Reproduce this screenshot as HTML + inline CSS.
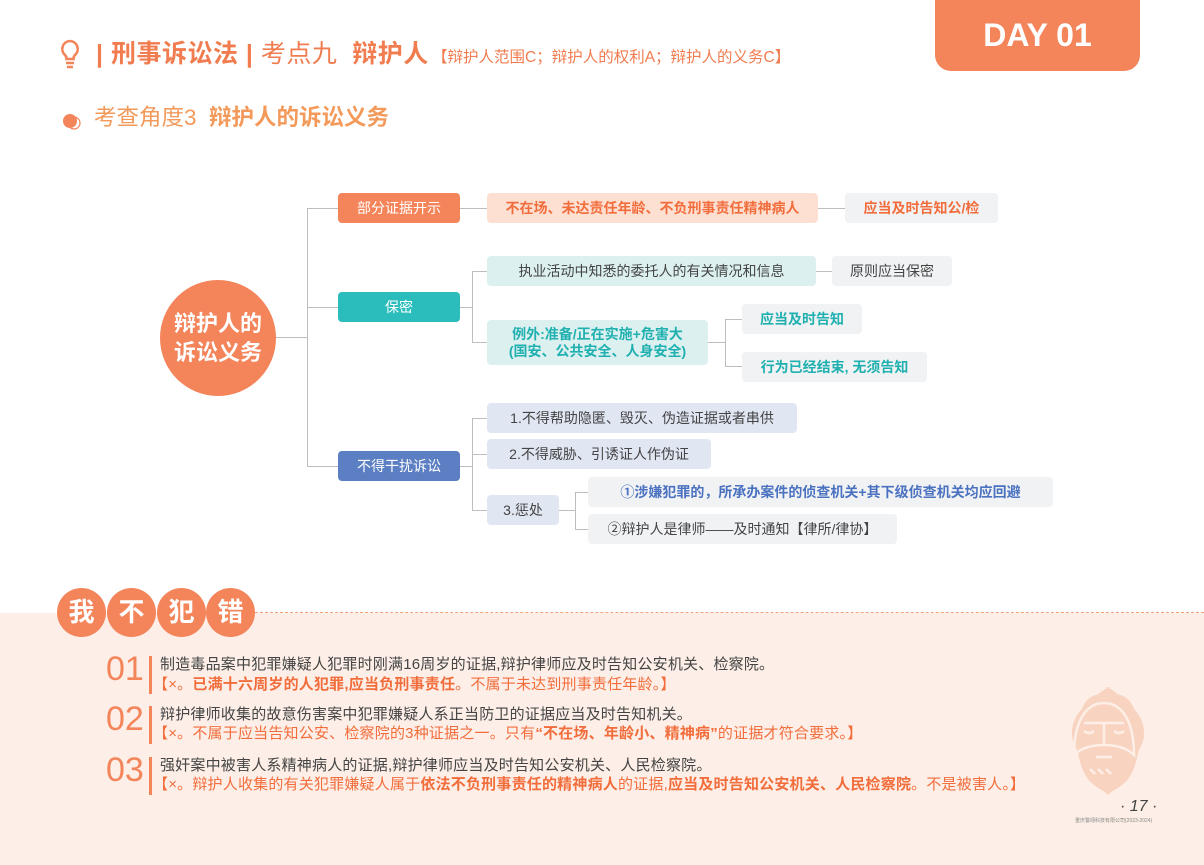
<!DOCTYPE html>
<html><head><meta charset="utf-8"><style>
*{margin:0;padding:0;box-sizing:border-box}
body{width:1204px;height:865px;position:relative;overflow:hidden;background:#fff;font-family:"Liberation Sans","Noto Sans CJK SC",sans-serif}
.a{position:absolute}
.b{position:absolute;border-radius:4px;display:flex;align-items:center;justify-content:center;font-size:14px;line-height:17px;text-align:center;white-space:nowrap}
.l{position:absolute;background:#bdbdbd}
.t{position:absolute;white-space:nowrap;font-size:14px;line-height:18px}
.q{font-size:15px;letter-spacing:0.2px}
.o{color:#f26d3c;font-weight:bold}
</style></head><body>
<div class="a" style="left:0;top:613px;width:1204px;height:252px;background:#fdefe7"></div>
<div class="a" style="left:255px;top:612px;width:949px;border-top:1px dashed #f4a07c"></div>

<div class="a" style="left:935px;top:0;width:205px;height:71px;background:#f4845a;border-radius:0 0 16px 16px;color:#fff;font-weight:bold;font-size:32px;display:flex;align-items:center;justify-content:center;font-family:'Liberation Sans Narrow','Liberation Sans',sans-serif">DAY 01</div>

<svg class="a" style="left:58px;top:38px" width="24" height="32" viewBox="0 0 24 32"><path d="M12 3a8 8 0 0 0-5 14c1 1 1.5 2 1.5 4h7c0-2 .5-3 1.5-4A8 8 0 0 0 12 3z" fill="none" stroke="#f4845a" stroke-width="2.6"/><path d="M8 25h8M9 29h6" stroke="#f4845a" stroke-width="2.6"/></svg>
<div class="t" style="left:96px;top:38px;font-size:25px;line-height:32px;color:#f07c4f;letter-spacing:0.5px"><b>| 刑事诉讼法 |</b> 考点九 &nbsp;<b>辩护人</b></div>
<div class="t" style="left:432px;top:49px;font-size:15.5px;color:#f07c4f">【辩护人范围C；辩护人的权利A；辩护人的义务C】</div>

<svg class="a" style="left:62px;top:111px" width="20" height="20"><circle cx="8" cy="10" r="7" fill="#f4845a"/><circle cx="12" cy="12" r="6" fill="none" stroke="#f4845a" stroke-width="1.2"/></svg>
<div class="t" style="left:94px;top:103px;font-size:22.5px;line-height:30px;color:#f39a5b">考查角度3 &nbsp;<b>辩护人的诉讼义务</b></div>

<div class="l" style="left:276px;top:337px;width:31px;height:1px"></div>
<div class="l" style="left:307px;top:208px;width:1px;height:259px"></div>
<div class="l" style="left:307px;top:208px;width:31px;height:1px"></div>
<div class="l" style="left:307px;top:307px;width:31px;height:1px"></div>
<div class="l" style="left:307px;top:466px;width:31px;height:1px"></div>
<div class="l" style="left:460px;top:208px;width:27px;height:1px"></div>
<div class="l" style="left:818px;top:208px;width:27px;height:1px"></div>
<div class="l" style="left:460px;top:307px;width:12px;height:1px"></div>
<div class="l" style="left:472px;top:271px;width:1px;height:72px"></div>
<div class="l" style="left:472px;top:271px;width:15px;height:1px"></div>
<div class="l" style="left:472px;top:342px;width:15px;height:1px"></div>
<div class="l" style="left:816px;top:271px;width:16px;height:1px"></div>
<div class="l" style="left:708px;top:342px;width:17px;height:1px"></div>
<div class="l" style="left:725px;top:319px;width:1px;height:48px"></div>
<div class="l" style="left:725px;top:319px;width:17px;height:1px"></div>
<div class="l" style="left:725px;top:366px;width:17px;height:1px"></div>
<div class="l" style="left:460px;top:466px;width:12px;height:1px"></div>
<div class="l" style="left:472px;top:418px;width:1px;height:93px"></div>
<div class="l" style="left:472px;top:418px;width:15px;height:1px"></div>
<div class="l" style="left:472px;top:454px;width:15px;height:1px"></div>
<div class="l" style="left:472px;top:510px;width:15px;height:1px"></div>
<div class="l" style="left:559px;top:510px;width:16px;height:1px"></div>
<div class="l" style="left:575px;top:492px;width:1px;height:38px"></div>
<div class="l" style="left:575px;top:492px;width:13px;height:1px"></div>
<div class="l" style="left:575px;top:529px;width:13px;height:1px"></div>

<div class="a" style="left:160px;top:280px;width:116px;height:116px;border-radius:50%;background:#f4845a;color:#fff;font-weight:bold;font-size:22px;line-height:29px;display:flex;align-items:center;justify-content:center;text-align:center">辩护人的<br>诉讼义务</div>

<div class="b" style="left:338px;top:193px;width:122px;height:30px;background:#f4845a;color:#fff">部分证据开示</div>
<div class="b" style="left:338px;top:292px;width:122px;height:30px;background:#2bbcbc;color:#fff">保密</div>
<div class="b" style="left:338px;top:451px;width:122px;height:30px;background:#5b7fc2;color:#fff">不得干扰诉讼</div>

<div class="b o" style="left:487px;top:193px;width:331px;height:30px;background:#fde0d2">不在场、未达责任年龄、不负刑事责任精神病人</div>
<div class="b o" style="left:845px;top:193px;width:153px;height:30px;background:#f1f2f4">应当及时告知公/检</div>
<div class="b" style="left:487px;top:256px;width:329px;height:30px;background:#dcf0f0;color:#444">执业活动中知悉的委托人的有关情况和信息</div>
<div class="b" style="left:832px;top:256px;width:120px;height:30px;background:#f1f2f4;color:#444">原则应当保密</div>
<div class="b" style="left:487px;top:320px;width:221px;height:45px;background:#dcf0f0;color:#20b0b0;font-weight:bold">例外:准备/正在实施+危害大<br>(国安、公共安全、人身安全)</div>
<div class="b" style="left:742px;top:304px;width:120px;height:30px;background:#f1f2f4;color:#20b0b0;font-weight:bold">应当及时告知</div>
<div class="b" style="left:742px;top:352px;width:185px;height:30px;background:#f1f2f4;color:#20b0b0;font-weight:bold">行为已经结束, 无须告知</div>
<div class="b" style="left:487px;top:403px;width:310px;height:30px;background:#e1e6f3;color:#444">1.不得帮助隐匿、毁灭、伪造证据或者串供</div>
<div class="b" style="left:487px;top:439px;width:224px;height:30px;background:#e1e6f3;color:#444">2.不得威胁、引诱证人作伪证</div>
<div class="b" style="left:487px;top:495px;width:72px;height:30px;background:#e1e6f3;color:#444">3.惩处</div>
<div class="b" style="left:588px;top:477px;width:465px;height:30px;background:#f1f2f4;color:#4a72c0;font-weight:bold">①涉嫌犯罪的，所承办案件的侦查机关+其下级侦查机关均应回避</div>
<div class="b" style="left:588px;top:514px;width:309px;height:30px;background:#f1f2f4;color:#444">②辩护人是律师——及时通知【律所/律协】</div>

<div class="b" style="left:57px;top:588px;width:49px;height:49px;border-radius:50%;background:#f4845a;color:#fff;font-size:26px;font-weight:bold">我</div>
<div class="b" style="left:107px;top:588px;width:49px;height:49px;border-radius:50%;background:#f4845a;color:#fff;font-size:26px;font-weight:bold">不</div>
<div class="b" style="left:157px;top:588px;width:49px;height:49px;border-radius:50%;background:#f4845a;color:#fff;font-size:26px;font-weight:bold">犯</div>
<div class="b" style="left:206px;top:588px;width:49px;height:49px;border-radius:50%;background:#f4845a;color:#fff;font-size:26px;font-weight:bold">错</div>

<div class="t" style="left:106px;top:650px;font-size:34px;line-height:38px;color:#f4845a">01</div>
<div class="a" style="left:149px;top:656px;width:3px;height:38px;background:#f4845a"></div>
<div class="t q" style="left:160px;top:656px;color:#444">制造毒品案中犯罪嫌疑人犯罪时刚满16周岁的证据,辩护律师应及时告知公安机关、检察院。</div>
<div class="t q" style="left:153px;top:676px;color:#f26d3c">【×。<b>已满十六周岁的人犯罪,应当负刑事责任</b>。不属于未达到刑事责任年龄。】</div>

<div class="t" style="left:106px;top:700px;font-size:34px;line-height:38px;color:#f4845a">02</div>
<div class="a" style="left:149px;top:706px;width:3px;height:38px;background:#f4845a"></div>
<div class="t q" style="left:160px;top:706px;color:#444">辩护律师收集的故意伤害案中犯罪嫌疑人系正当防卫的证据应当及时告知机关。</div>
<div class="t q" style="left:153px;top:725px;color:#f26d3c">【×。不属于应当告知公安、检察院的3种证据之一。只有<b>“不在场、年龄小、精神病”</b>的证据才符合要求。】</div>

<div class="t" style="left:106px;top:751px;font-size:34px;line-height:38px;color:#f4845a">03</div>
<div class="a" style="left:149px;top:757px;width:3px;height:38px;background:#f4845a"></div>
<div class="t q" style="left:160px;top:757px;color:#444">强奸案中被害人系精神病人的证据,辩护律师应当及时告知公安机关、人民检察院。</div>
<div class="t q" style="left:153px;top:776px;color:#f26d3c">【×。辩护人收集的有关犯罪嫌疑人属于<b>依法不负刑事责任的精神病人</b>的证据,<b>应当及时告知公安机关、人民检察院</b>。不是被害人。】</div>

<svg class="a" style="left:1058px;top:685px" width="92" height="112" viewBox="0 0 92 112"><path d="M46 2c8 0 10 6 16 8 8 2 12 8 14 14 4 4 10 12 10 24 0 10-4 14-6 20-2 10-4 18-10 26-6 8-14 10-20 16-6-6-14-8-20-16-6-8-8-16-10-26-2-6-6-10-6-20 0-12 6-20 10-24 2-6 6-12 14-14 6-2 8-8 18-8z" fill="#f8d3c0"/><path d="M16 70c0-30 10-52 30-52s30 22 30 52c-8-8-20-10-30-10s-22 2-30 10z" fill="none" stroke="#fdefe7" stroke-width="2.5"/><path d="M26 38h40M46 38v22M26 46q5 4 10 0M56 46q5 4 10 0M38 72h16M32 84l5 5M40 84l5 5M48 84l5 5" stroke="#fdefe7" stroke-width="2.5" fill="none"/></svg>
<div class="t" style="left:1120px;top:797px;font-size:16px;line-height:20px;color:#444">· <i>17</i> ·</div>
<div class="t" style="left:1075px;top:818px;font-size:5px;line-height:7px;color:#888">重庆警翊科技有限公司(2023-2024)</div>
</body></html>
